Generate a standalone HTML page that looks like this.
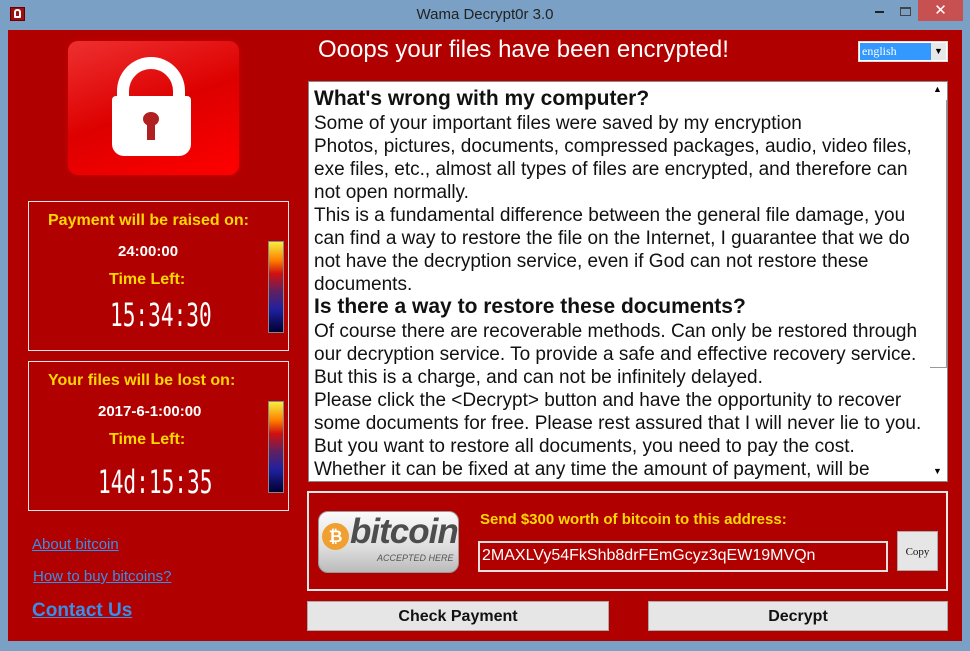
<!DOCTYPE html>
<html><head><meta charset="utf-8"><style>
*{margin:0;padding:0;box-sizing:border-box}
body{width:970px;height:651px;background:#7aa0c6;font-family:"Liberation Sans",Arial,sans-serif;position:relative;overflow:hidden}
.abs{position:absolute}
.title{left:0;top:0;width:970px;height:30px;text-align:center;font-size:15px;line-height:30px;color:#222}
.client{left:8px;top:30px;width:954px;height:611px;background:#b00000}
.panel{border:1px solid #e8e8e8}
.y{color:#ffd800;font-weight:bold;font-size:16px}
.w{color:#fff;font-weight:bold;font-size:15px}
.dig{color:#fff;font-family:"DejaVu Sans Mono","Liberation Mono",monospace;font-size:32px;letter-spacing:0px;transform:scaleX(0.66);transform-origin:left}
.bar{width:16px;height:92px;border:1px solid #888;background:linear-gradient(#f4f040,#ff8000 20%,#d01010 35%,#602060 55%,#2020a0 75%,#000030)}
.txt{left:308px;top:81px;width:640px;height:401px;background:#fff;border:1px solid #888;overflow:hidden}
.txt div{position:absolute;left:5px;white-space:nowrap;font-size:19px;color:#111;line-height:23px}
.txt b{font-size:21px}
a{color:#3a8ee8;text-decoration:underline}
.btn{background:#e6e6e6;border:1px solid #aaa;text-align:center;font-weight:bold;font-size:16px;color:#111}
</style></head><body>
<div class="abs title">Wama Decrypt0r 3.0</div>
<div class="abs" style="left:10px;top:7px;width:15px;height:14px;background:#9c1010;border:1px solid #600"></div>
<div class="abs" style="left:14px;top:9px;width:7px;height:9px;border:2px solid #fff;border-radius:3px 3px 1px 1px"></div>
<div class="abs" style="left:875px;top:11px;width:9px;height:2px;background:#222"></div>
<div class="abs" style="left:900px;top:7px;width:11px;height:9px;border:1px solid #444;border-top-width:2px"></div>
<div class="abs" style="left:918px;top:0;width:45px;height:21px;background:#c75050;color:#fff;text-align:center;font-size:15px;line-height:21px">✕</div>
<div class="abs client"></div>

<div class="abs" style="left:68px;top:41px;width:171px;height:134px;border-radius:10px;background:linear-gradient(160deg,#ee3030,#dd0000 50%,#ff0000);box-shadow:0 0 6px #c00"></div>
<div class="abs" style="left:117px;top:57px;width:68px;height:75px;border:12px solid #fff;border-bottom:none;border-radius:34px 34px 0 0"></div>
<div class="abs" style="left:112px;top:96px;width:79px;height:60px;background:#fff;border-radius:4px 4px 12px 12px"></div>
<div class="abs" style="left:143px;top:112px;width:16px;height:14px;background:#b02020;border-radius:50%"></div>
<div class="abs" style="left:147px;top:120px;width:8px;height:20px;background:#b02020"></div>

<div class="abs" style="left:318px;top:36px;font-size:24px;color:#fff">Ooops your files have been encrypted!</div>
<div class="abs" style="left:858px;top:41px;width:90px;height:21px;border:1px solid #ddd;background:#fff"></div>
<div class="abs" style="left:860px;top:43px;width:71px;height:17px;background:#3399ff;color:#fff;font-family:'Liberation Serif',serif;font-size:12px;line-height:17px;padding-left:2px">english</div>
<div class="abs" style="left:931px;top:43px;width:15px;height:17px;background:#e8e8e8;font-size:9px;text-align:center;line-height:17px">▼</div>

<div class="abs panel" style="left:28px;top:201px;width:261px;height:150px"></div>
<div class="abs y" style="left:48px;top:212px">Payment will be raised on:</div>
<div class="abs w" style="left:118px;top:243px">24:00:00</div>
<div class="abs y" style="left:109px;top:271px">Time Left:</div>
<div class="abs dig" style="left:110px;top:296px">15:34:30</div>
<div class="abs bar" style="left:268px;top:241px"></div>

<div class="abs panel" style="left:28px;top:361px;width:261px;height:150px"></div>
<div class="abs y" style="left:48px;top:372px">Your files will be lost on:</div>
<div class="abs w" style="left:98px;top:403px">2017-6-1:00:00</div>
<div class="abs y" style="left:109px;top:431px">Time Left:</div>
<div class="abs dig" style="left:98px;top:463px">14d:15:35</div>
<div class="abs bar" style="left:268px;top:401px"></div>

<div class="abs" style="left:32px;top:536px;font-size:15px"><a>About bitcoin</a></div>
<div class="abs" style="left:33px;top:568px;font-size:15px"><a>How to buy bitcoins?</a></div>
<div class="abs" style="left:32px;top:600px;font-size:19px;font-weight:bold"><a>Contact Us</a></div>

<div class="abs txt">
<div style="top:5px"><b>What's wrong with my computer?</b></div>
<div style="top:30px">Some of your important files were saved by my encryption</div>
<div style="top:53px">Photos, pictures, documents, compressed packages, audio, video files,</div>
<div style="top:76px">exe files, etc., almost all types of files are encrypted, and therefore can</div>
<div style="top:99px">not open normally.</div>
<div style="top:122px">This is a fundamental difference between the general file damage, you</div>
<div style="top:145px">can find a way to restore the file on the Internet, I guarantee that we do</div>
<div style="top:168px">not have the decryption service, even if God can not restore these</div>
<div style="top:191px">documents.</div>
<div style="top:213px"><b>Is there a way to restore these documents?</b></div>
<div style="top:238px">Of course there are recoverable methods. Can only be restored through</div>
<div style="top:261px">our decryption service. To provide a safe and effective recovery service.</div>
<div style="top:284px">But this is a charge, and can not be infinitely delayed.</div>
<div style="top:307px">Please click the &lt;Decrypt&gt; button and have the opportunity to recover</div>
<div style="top:330px">some documents for free. Please rest assured that I will never lie to you.</div>
<div style="top:353px">But you want to restore all documents, you need to pay the cost.</div>
<div style="top:376px">Whether it can be fixed at any time the amount of payment, will be</div>
</div>
<div class="abs" style="left:930px;top:82px;width:17px;height:399px;background:#fff"></div>
<div class="abs" style="left:930px;top:100px;width:17px;height:268px;border-right:1px solid #999;border-bottom:1px solid #999"></div>
<div class="abs" style="left:933px;top:84px;font-size:9px">▲</div>
<div class="abs" style="left:933px;top:466px;font-size:9px">▼</div>

<div class="abs panel" style="left:307px;top:491px;width:641px;height:100px;border-width:2px"></div>
<div class="abs" style="left:318px;top:511px;width:141px;height:62px;border-radius:10px;background:linear-gradient(#fafafa,#ddd 60%,#bbb);border:1px solid #999"></div>
<div class="abs" style="left:322px;top:523px;width:27px;height:27px;border-radius:50%;background:#f0a030;color:#fff;font-weight:bold;font-size:17px;text-align:center;line-height:27px">₿</div>
<div class="abs" style="left:350px;top:512px;font-size:35px;font-weight:bold;font-style:italic;color:#4d4d4d;letter-spacing:-1px">bitcoin</div>
<div class="abs" style="left:377px;top:553px;font-size:9px;font-style:italic;color:#555">ACCEPTED HERE</div>
<div class="abs y" style="left:480px;top:511px;font-size:15px">Send $300 worth of bitcoin to this address:</div>
<div class="abs" style="left:478px;top:541px;width:410px;height:31px;border:2px solid #e0e0e0;color:#fff;font-size:16px;line-height:26px;padding-left:2px">2MAXLVy54FkShb8drFEmGcyz3qEW19MVQn</div>
<div class="abs btn" style="left:897px;top:531px;width:41px;height:40px;font-weight:normal;font-family:'Liberation Serif',serif;font-size:11px;line-height:40px">Copy</div>

<div class="abs btn" style="left:307px;top:601px;width:302px;height:30px;line-height:30px">Check Payment</div>
<div class="abs btn" style="left:648px;top:601px;width:300px;height:30px;line-height:30px">Decrypt</div>
</body></html>
